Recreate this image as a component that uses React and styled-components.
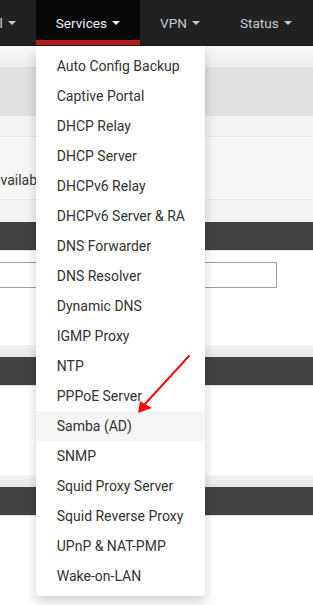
import React from 'react';
import styled, { createGlobalStyle } from 'styled-components';

const GlobalStyle = createGlobalStyle`
body {
  margin: 0;
  font-family: Roboto, "Liberation Sans", Arial, sans-serif;
  background: #fff;
  overflow: hidden;
}
`;

const Page = styled.div`
position: relative;
width: 313px;
height: 605px;
overflow: hidden;
`;

const Navbar = styled.nav`
display: flex;
height: 45px;
background: #212121;
border-bottom: 1px solid #1a1a1a;
`;

const NavList = styled.ul`
display: flex;
list-style: none;
margin: 0 0 0 -64px;
padding: 0;
`;

const NavItem = styled.li`
position: relative;
flex-shrink: 0;
display: flex;
align-items: center;
box-sizing: border-box;
height: 45px;
padding: 5px 20px 0;
font-size: 13.6px;
color: ${p => (p.$active ? '#eef2f6' : '#c3cbd3')};
background: ${p => (p.$active ? '#080808' : 'transparent')};
border-bottom: 5px solid ${p => (p.$active ? '#b71c1c' : 'transparent')};
`;

const Caret = styled.span`
display: inline-block;
margin-left: 5px;
width: 0;
height: 0;
border-top: 4px solid currentColor;
border-left: 4px solid transparent;
border-right: 4px solid transparent;
`;

const Dropdown = styled.ul`
position: absolute;
top: 46px;
left: 0;
z-index: 10;
width: 169px;
margin: 0;
padding: 5px 0;
list-style: none;
background: #fff;
border-radius: 0 0 4px 4px;
box-shadow: 0 6px 12px rgba(0, 0, 0, 0.175);
`;

const DropItem = styled.li`
height: 30px;
line-height: 30px;
padding: 0 21px;
font-size: 14px;
color: #333;
white-space: nowrap;
background: ${p => (p.$active ? '#f5f5f5' : 'transparent')};
`;

const TopShade = styled.div`
height: 21px;
background: linear-gradient(#f9f9f9, #eeeeee);
`;

const HeaderBar = styled.div`
height: 49px;
background: #e0e0e0;
`;

const Band = styled.div`
height: ${p => p.$h}px;
background: ${p => p.$bg || '#f3f3f3'};
`;

const InfoBox = styled.div`
display: flex;
align-items: flex-end;
box-sizing: border-box;
height: 64px;
padding-bottom: 9px;
background: #f6f6f6;
border-top: 1px solid #e8e8e8;
border-bottom: 1px solid #e8e8e8;
`;

const InfoText = styled.span`
margin-left: -7px;
font-size: 14px;
line-height: 20px;
color: #333;
white-space: nowrap;
`;

const PanelHeading = styled.div`
height: 28px;
background: #424242;
`;

const PanelBody = styled.div`
box-sizing: border-box;
height: ${p => p.$h}px;
padding-top: ${p => p.$pt || 0}px;
background: #fff;
border-top: 1px solid #e2e2e2;
`;

const Gap = styled.div`
height: 12px;
background: linear-gradient(#f4f4f4, #e6e6e6);
`;

const Input = styled.input`
display: block;
box-sizing: border-box;
margin-left: -10px;
width: 287px;
height: 26px;
border: 1px solid #9c9cad;
border-radius: 0;
background: #fff;
`;

const Arrow = styled.svg`
position: absolute;
left: 130px;
top: 350px;
z-index: 20;
`;

const services = [
  'Auto Config Backup',
  'Captive Portal',
  'DHCP Relay',
  'DHCP Server',
  'DHCPv6 Relay',
  'DHCPv6 Server & RA',
  'DNS Forwarder',
  'DNS Resolver',
  'Dynamic DNS',
  'IGMP Proxy',
  'NTP',
  'PPPoE Server',
  'Samba (AD)',
  'SNMP',
  'Squid Proxy Server',
  'Squid Reverse Proxy',
  'UPnP & NAT-PMP',
  'Wake-on-LAN',
];

const App = () => {
  return (
    <Page>
      <GlobalStyle />
      <Navbar>
        <NavList>
          <NavItem>Firewall<Caret /></NavItem>
          <NavItem $active>
            Services<Caret />
            <Dropdown>
              {services.map(s => (
                <DropItem key={s} $active={s === 'Samba (AD)'}>{s}</DropItem>
              ))}
            </Dropdown>
          </NavItem>
          <NavItem>VPN<Caret /></NavItem>
          <NavItem>Status<Caret /></NavItem>
        </NavList>
      </Navbar>
      <TopShade />
      <HeaderBar />
      <Band $h={20} />
      <InfoBox>
        <InfoText>available</InfoText>
      </InfoBox>
      <Band $h={22} />
      <PanelHeading />
      <PanelBody $h={95} $pt={11}>
        <Input type="text" />
      </PanelBody>
      <Gap />
      <PanelHeading />
      <PanelBody $h={90} />
      <Gap />
      <PanelHeading />
      <PanelBody $h={90} />
      <Arrow width="70" height="70" viewBox="0 0 70 70">
        <line x1="59" y1="6" x2="15" y2="54" stroke="#f01010" strokeWidth="2" strokeLinecap="round" />
        <polygon points="8,63 10,51 22,58" fill="#f01010" />
      </Arrow>
    </Page>
  );
};

export default App;
